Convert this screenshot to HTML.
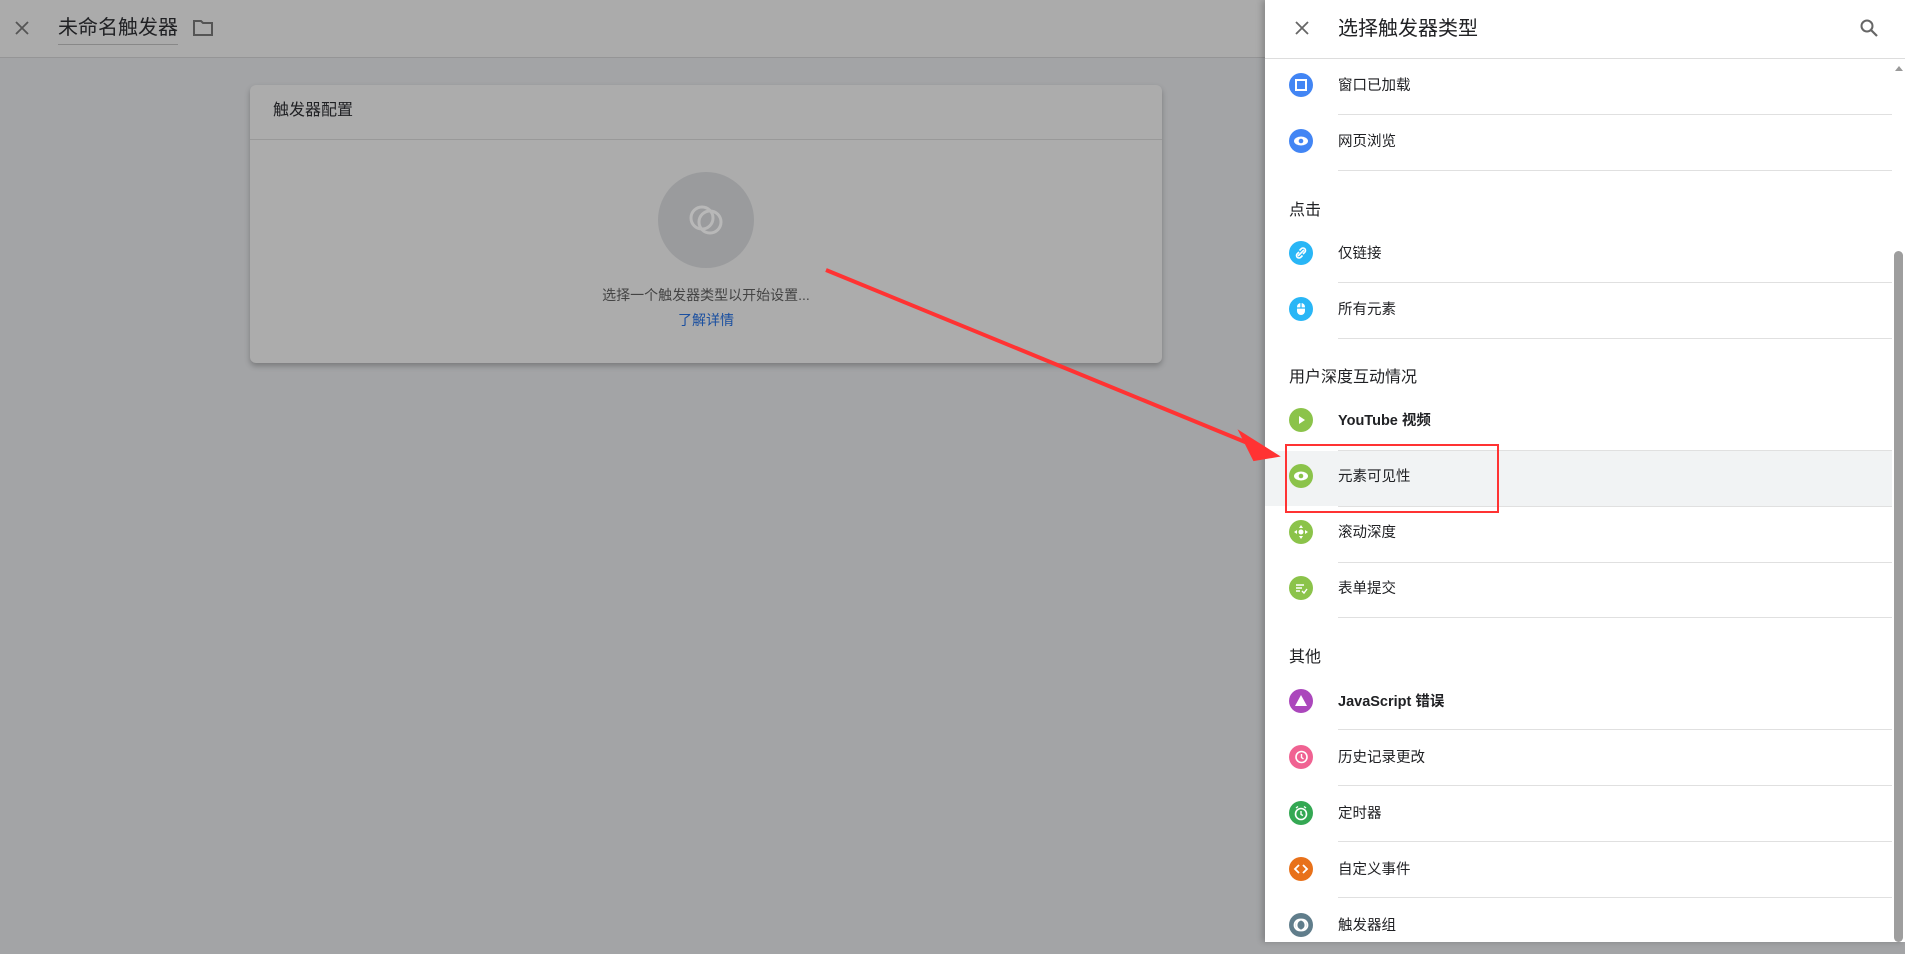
<!DOCTYPE html>
<html><head><meta charset="utf-8">
<style>
*{margin:0;padding:0;box-sizing:border-box}
body{width:1905px;height:942px;overflow:hidden;position:relative;background:#a3a4a6;font-family:"Liberation Sans","Noto Sans CJK SC",sans-serif;color:#202124}
.abs{position:absolute}
.top{left:0;top:0;width:1265px;height:58px;background:#ababab;border-bottom:1px solid #959596}
.card{left:250px;top:85px;width:912px;height:278px;background:#acacac;border-radius:6px;box-shadow:0 3px 6px rgba(0,0,0,.25)}
.panel{left:1265px;top:0;width:640px;height:942px;background:#fff;box-shadow:-3px 0 6px rgba(0,0,0,.2)}
.row{position:absolute;left:0;width:627px;height:56px}
.row .ic{position:absolute;left:24px;top:16px;width:24px;height:24px;border-radius:50%}
.row .t{position:absolute;left:73px;top:1px;line-height:56px;font-size:14.5px;color:#202124}
.sep{position:absolute;left:73px;width:554px;height:1px;background:#e0e0e0}
.h{position:absolute;left:24px;font-size:16px;color:#202124}
.ic svg{position:absolute;left:0;top:0}
</style></head><body>
<div class="abs top">
  <svg class="abs" style="left:14px;top:20px" width="16" height="16" viewBox="0 0 16 16"><path d="M2 2L14 14M14 2L2 14" stroke="#555" stroke-width="1.8"/></svg>
  <div class="abs" style="left:58px;top:14px;font-size:20px;color:#202124;line-height:28px">未命名触发器</div>
  <div class="abs" style="left:58px;top:44px;width:120px;height:1px;background:#888"></div>
  <svg class="abs" style="left:192px;top:19px" width="22" height="18" viewBox="0 0 22 18"><path d="M2 2h7l2 2h9v12H2z" fill="none" stroke="#555" stroke-width="2"/></svg>
</div>
<div class="abs card">
  <div class="abs" style="left:23px;top:14px;font-size:16px;line-height:24px">触发器配置</div>
  <div class="abs" style="left:0;top:54px;width:912px;height:1px;background:#999"></div>
  <div class="abs" style="left:408px;top:87px;width:96px;height:96px;border-radius:50%;background:#9a9b9d"></div>
  <svg class="abs" style="left:430px;top:109px" width="52" height="52" viewBox="0 0 52 52"><circle cx="22" cy="24" r="11" fill="none" stroke="#b8b8b8" stroke-width="3"/><circle cx="30" cy="28" r="11" fill="none" stroke="#b8b8b8" stroke-width="3"/></svg>
  <div class="abs" style="left:0;width:912px;top:200px;text-align:center;font-size:14px;color:#444">选择一个触发器类型以开始设置...</div>
  <div class="abs" style="left:0;width:912px;top:225px;text-align:center;font-size:14px;color:#1a4fa0">了解详情</div>
</div>
<div class="abs panel">
  <svg class="abs" style="left:29px;top:20px" width="16" height="16" viewBox="0 0 16 16"><path d="M2 2L14 14M14 2L2 14" stroke="#666" stroke-width="1.8"/></svg>
  <div class="abs" style="left:73px;top:15px;font-size:20px;line-height:28px;color:#202124">选择触发器类型</div>
  <svg class="abs" style="left:594px;top:18px" width="20" height="20" viewBox="0 0 20 20"><circle cx="8" cy="8" r="5.5" fill="none" stroke="#666" stroke-width="2"/><path d="M12 12l6 6" stroke="#666" stroke-width="2.2"/></svg>
  <div class="abs" style="left:0;top:58px;width:640px;height:1px;background:#ddd"></div>
  <svg class="abs" style="left:628px;top:64px" width="12" height="8"><path d="M2 7L6 2L10 7z" fill="#999"/></svg>
  <div class="abs" style="left:629px;top:251px;width:9px;height:691px;border-radius:5px;background:#9e9e9e"></div>

  <div class="row" style="top:57px"><div class="ic" style="background:#4285f4"><svg width="24" height="24"><rect x="7" y="7" width="10" height="10" fill="none" stroke="#fff" stroke-width="2"/></svg></div><div class="t">窗口已加载</div></div>
  <div class="sep" style="top:114px"></div>
  <div class="row" style="top:113px"><div class="ic" style="background:#4285f4"><svg width="24" height="24"><ellipse cx="12" cy="12" rx="7" ry="4.5" fill="#fff"/><circle cx="12" cy="12" r="2.3" fill="#4285f4"/></svg></div><div class="t">网页浏览</div></div>
  <div class="sep" style="top:170px"></div>
  <div class="h" style="top:196px">点击</div>
  <div class="row" style="top:225px"><div class="ic" style="background:#29b6f6"><svg width="24" height="24"><path d="M9 15l6-6M10 11l-2 2a2.5 2.5 0 0 0 3.5 3.5l2-2M14 13l2-2a2.5 2.5 0 0 0-3.5-3.5l-2 2" fill="none" stroke="#fff" stroke-width="1.6"/></svg></div><div class="t">仅链接</div></div>
  <div class="sep" style="top:282px"></div>
  <div class="row" style="top:281px"><div class="ic" style="background:#29b6f6"><svg width="24" height="24"><rect x="8" y="6" width="8" height="12" rx="4" fill="#fff"/><path d="M8 11h8M12 6v5" stroke="#29b6f6" stroke-width="1.2"/></svg></div><div class="t">所有元素</div></div>
  <div class="sep" style="top:338px"></div>
  <div class="h" style="top:363px">用户深度互动情况</div>
  <div class="row" style="top:392px"><div class="ic" style="background:#8bc34a"><svg width="24" height="24"><path d="M10 8l6 4-6 4z" fill="#fff"/></svg></div><div class="t" style="font-weight:bold">YouTube 视频</div></div>
  <div class="row" style="top:451px;height:55px;background:#f1f3f4"><div class="ic" style="background:#8bc34a;top:13px"><svg width="24" height="24"><ellipse cx="12" cy="12" rx="7" ry="4.5" fill="#fff"/><circle cx="12" cy="12" r="2.3" fill="#8bc34a"/></svg></div><div class="t" style="line-height:50px">元素可见性</div></div>
  <div class="sep" style="top:450px"></div>
  <div class="sep" style="top:506px"></div>
  <div class="row" style="top:504px"><div class="ic" style="background:#8bc34a"><svg width="24" height="24"><circle cx="12" cy="12" r="2.5" fill="#fff"/><path d="M12 5l2 3h-4zM12 19l2-3h-4zM5 12l3-2v4zM19 12l-3-2v4z" fill="#fff"/></svg></div><div class="t">滚动深度</div></div>
  <div class="sep" style="top:562px"></div>
  <div class="row" style="top:560px"><div class="ic" style="background:#8bc34a"><svg width="24" height="24"><path d="M7 9h8M7 12h6M7 15h4M13 15l2 2 3-4" fill="none" stroke="#fff" stroke-width="1.4"/></svg></div><div class="t">表单提交</div></div>
  <div class="sep" style="top:617px"></div>
  <div class="h" style="top:643px">其他</div>
  <div class="row" style="top:673px"><div class="ic" style="background:#ab47bc"><svg width="24" height="24"><path d="M12 6l6 11H6z" fill="#fff"/></svg></div><div class="t" style="font-weight:bold">JavaScript 错误</div></div>
  <div class="sep" style="top:729px"></div>
  <div class="row" style="top:729px"><div class="ic" style="background:#f06292"><svg width="24" height="24"><circle cx="12.5" cy="12" r="5.5" fill="none" stroke="#fff" stroke-width="1.6"/><path d="M12.5 9v3.5l2 1.5" fill="none" stroke="#fff" stroke-width="1.4"/></svg></div><div class="t">历史记录更改</div></div>
  <div class="sep" style="top:785px"></div>
  <div class="row" style="top:785px"><div class="ic" style="background:#34a853"><svg width="24" height="24"><circle cx="12" cy="13" r="5.5" fill="none" stroke="#fff" stroke-width="1.6"/><path d="M12 10v3.5l2 1M7 7l2-1.5M17 7l-2-1.5" fill="none" stroke="#fff" stroke-width="1.4"/></svg></div><div class="t">定时器</div></div>
  <div class="sep" style="top:841px"></div>
  <div class="row" style="top:841px"><div class="ic" style="background:#e8711a"><svg width="24" height="24"><path d="M10 8l-4 4 4 4M14 8l4 4-4 4" fill="none" stroke="#fff" stroke-width="1.8"/></svg></div><div class="t">自定义事件</div></div>
  <div class="sep" style="top:897px"></div>
  <div class="row" style="top:897px"><div class="ic" style="background:#607d8b"><svg width="24" height="24"><circle cx="11" cy="12" r="5.5" fill="none" stroke="#fff" stroke-width="1.8"/><circle cx="13" cy="12" r="5.5" fill="none" stroke="#fff" stroke-width="1.8"/></svg></div><div class="t">触发器组</div></div>
</div>
<div class="abs" style="left:1285px;top:444px;width:214px;height:69px;border:2px solid #f33"></div>
<svg class="abs" style="left:0;top:0" width="1905" height="942"><path d="M826 270L1250 444" stroke="#f33" stroke-width="4"/><path d="M1278 456L1240 432L1254 460z" fill="#f33" stroke="#f33" stroke-width="2"/></svg>
</body></html>
